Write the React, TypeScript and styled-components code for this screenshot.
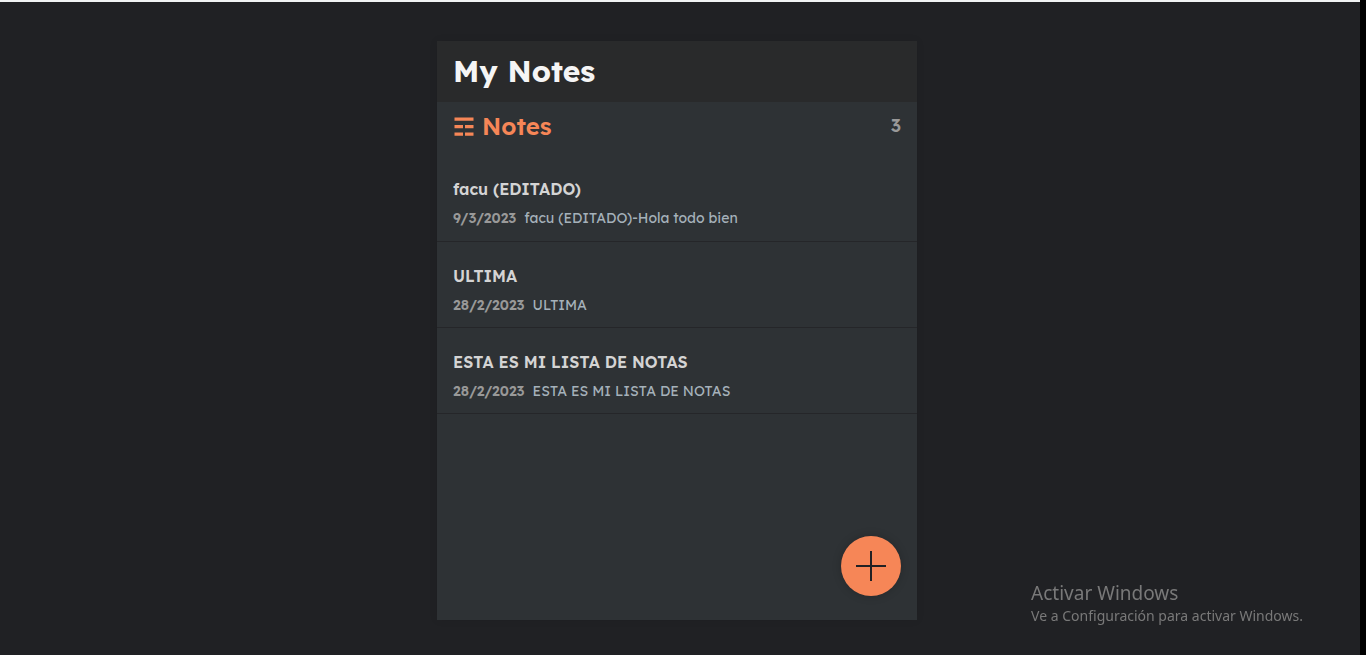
import React from "react";
import styled, { createGlobalStyle } from "styled-components";

const GlobalStyle = createGlobalStyle`
  * { box-sizing: border-box; }
  html { background: #000; }
  body {
    margin: 0;
    font-family: Lexend, Inter, "Noto Sans", sans-serif;
  }
`;

const Page = styled.div`
  min-height: 100vh;
  margin-right: 6px;
  padding: 39px 6px 35px 0;
  display: flex;
  justify-content: center;
  background: #202124;
  border-top: 2px solid #f1f3f4;
`;

const Panel = styled.main`
  position: relative;
  width: 100%;
  max-width: 480px;
  background: #2e3235;
  box-shadow: 0 0 8px rgba(0, 0, 0, 0.08);
`;

const Header = styled.header`
  padding: 10px 16px 11px;
  background: #292a2b;
`;

const AppTitle = styled.h1`
  margin: 0;
  font-size: 30px;
  line-height: 40px;
  font-weight: 700;
  color: #f5f5f5;
`;

const ListHeader = styled.div`
  padding: 9px 16px 14px;
  display: flex;
  justify-content: space-between;
`;

const ListTitle = styled.h2`
  margin: 0;
  display: flex;
  align-items: center;
  gap: 8px;
  font-size: 24px;
  line-height: 30px;
  font-weight: 600;
  color: #f68657;
`;

const Count = styled.span`
  font-size: 18px;
  line-height: 30px;
  font-weight: 600;
  color: #999;
`;

const List = styled.ul`
  margin: 0;
  padding: 0;
  list-style: none;
`;

const Item = styled.li`
  padding: 22px 16px 12px;
  border-bottom: 1px solid #252629;

  &:first-child {
    padding-bottom: 13px;
  }
`;

const NoteTitle = styled.h3`
  margin: 0 0 7px;
  font-size: 16px;
  line-height: 24px;
  font-weight: 600;
  color: #d4d4d4;
`;

const NoteMeta = styled.p`
  margin: 0;
  display: flex;
  gap: 8px;
  font-size: 14px;
  line-height: 20px;
  color: #a5b1ba;
`;

const NoteDate = styled.time`
  font-weight: 600;
  color: #999;
`;

const AddButton = styled.button`
  position: absolute;
  right: 16px;
  bottom: 24px;
  width: 60px;
  height: 60px;
  padding: 0;
  display: grid;
  place-items: center;
  border: 0;
  border-radius: 50%;
  background: #f68657;
  box-shadow: 0 0 10px rgba(0, 0, 0, 0.2);
  cursor: pointer;
`;

const Watermark = styled.aside`
  position: fixed;
  right: 63px;
  bottom: 29px;
  font-family: "Segoe UI", "Noto Sans", "Open Sans", sans-serif;
  color: #797979;
  pointer-events: none;
`;

const WatermarkTitle = styled.div`
  font-size: 19px;
  line-height: 25px;
`;

const WatermarkText = styled.div`
  font-size: 14px;
  line-height: 20px;
`;

const notes = [
  { title: "facu (EDITADO)", date: "9/3/2023", body: "facu (EDITADO)-Hola todo bien" },
  { title: "ULTIMA", date: "28/2/2023", body: "ULTIMA" },
  { title: "ESTA ES MI LISTA DE NOTAS", date: "28/2/2023", body: "ESTA ES MI LISTA DE NOTAS" },
];

function TrigramIcon() {
  return (
    <svg width="21" height="20" viewBox="0 0 21 20" fill="currentColor" aria-hidden="true">
      <path d="M1.5 1.4h19v3.4h-19zM1.5 8.9h8.5v3.4H1.5zM12 8.9h8.5v3.4H12zM1.5 16.4h8.5v3.4H1.5zM12 16.4h8.5v3.4H12z" />
    </svg>
  );
}

export default function App() {
  return (
    <>
      <GlobalStyle />
      <Page>
        <Panel>
          <Header>
            <AppTitle>My Notes</AppTitle>
          </Header>
          <ListHeader>
            <ListTitle>
              <TrigramIcon />
              Notes
            </ListTitle>
            <Count>{notes.length}</Count>
          </ListHeader>
          <List>
            {notes.map((note) => (
              <Item key={note.title}>
                <NoteTitle>{note.title}</NoteTitle>
                <NoteMeta>
                  <NoteDate>{note.date}</NoteDate>
                  <span>{note.body}</span>
                </NoteMeta>
              </Item>
            ))}
          </List>
          <AddButton type="button" aria-label="Add note">
            <svg width="30" height="30" viewBox="0 0 30 30" stroke="#202124" strokeWidth="2" aria-hidden="true">
              <path d="M15 0v30M0 15h30" />
            </svg>
          </AddButton>
        </Panel>
      </Page>
      <Watermark>
        <WatermarkTitle>Activar Windows</WatermarkTitle>
        <WatermarkText>Ve a Configuración para activar Windows.</WatermarkText>
      </Watermark>
    </>
  );
}
